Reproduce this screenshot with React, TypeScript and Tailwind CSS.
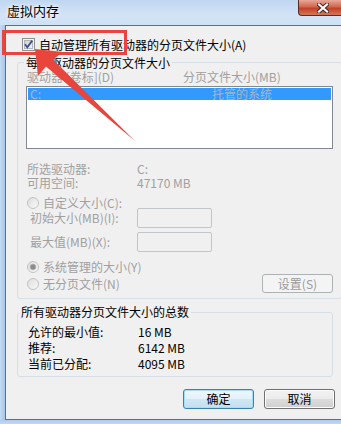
import { useId } from "react";

function CheckBox() {
  const id = useId();
  return (
    <svg width="13" height="13" viewBox="0 0 13 13" className="shrink-0">
      <defs>
        <linearGradient id={id} x1="0" y1="0" x2="1" y2="1">
          <stop offset="0" stopColor="#cbcfd5" />
          <stop offset="1" stopColor="#f6f6f6" />
        </linearGradient>
      </defs>
      <rect x="0.5" y="0.5" width="12" height="12" fill="#f4f4f4" stroke="#8e8f8f" />
      <rect x="2.5" y="2.5" width="8" height="8" fill={`url(#${id})`} stroke="#b2b4b8" />
      <path d="M3 6.3 L5.3 9.2 L10.2 2.6" fill="none" stroke="#3c4f8c" strokeWidth="1.8" />
    </svg>
  );
}

function Radio({ checked = false }: { checked?: boolean }) {
  const id = useId();
  return (
    <svg width="12" height="12" viewBox="0 0 12 12" className="shrink-0">
      <defs>
        <linearGradient id={id} x1="0" y1="0" x2="1" y2="1">
          <stop offset="0" stopColor="#dcdcdc" />
          <stop offset="1" stopColor="#fbfbfb" />
        </linearGradient>
      </defs>
      <circle cx="6" cy="6" r="5.5" fill={`url(#${id})`} stroke="#c2c2c2" />
      {checked && <circle cx="6" cy="6" r="2.8" fill="#8c8c8c" stroke="#a8a8a8" strokeWidth="0.8" />}
    </svg>
  );
}

function WinButton({ label, primary = false, disabled = false }: { label: string; primary?: boolean; disabled?: boolean }) {
  if (disabled) {
    return (
      <div className="w-[71px] h-[19px] shrink-0 ml-auto flex items-center justify-center rounded-[3px] border border-[#adb2b5] bg-[#f4f4f4] text-[#9a9a9a]">
        {label}
      </div>
    );
  }
  return (
    <div
      className={
        primary
          ? "w-[71px] h-[20px] flex items-center justify-center rounded-[3px] border border-[#3c7fb1] bg-[linear-gradient(#eef7fd,#e3f1fa_50%,#d1e7f5_50%,#c3dfef)] shadow-[inset_0_0_0_1px_#a9dcf6]"
          : "w-[71px] h-[20px] flex items-center justify-center rounded-[3px] border border-[#707070] bg-[linear-gradient(#f2f2f2,#ebebeb_50%,#dddddd_50%,#cfcfcf)] shadow-[inset_0_0_0_1px_#fcfcfc]"
      }
    >
      {label}
    </div>
  );
}

function Field() {
  return <div className="w-[75px] h-[20px] rounded-[2px] border border-[#c3c6c9] bg-[#f0f0f0]" />;
}

export default function App() {
  return (
    <div className="relative w-[341px] h-[424px] overflow-hidden flex flex-col bg-[#bcd5f0] font-['Noto_Sans_CJK_SC',sans-serif] text-[12px] leading-[14px] text-black">
      {/* title bar */}
      <div className="h-[25px] shrink-0 flex bg-[linear-gradient(#c0d7f1,#d2e3f6_60%,#cfe1f5)]">
        <div className="flex-1 pl-[7px] pt-[2px] text-[13px] leading-[17px] [text-shadow:0_0_6px_#fff,0_0_3px_#fff]">虚拟内存</div>
        <div className="w-[43px] h-[16px] shrink-0 flex items-center justify-center pl-[6px] rounded-bl-[4px] border-l border-b border-[#5e2a22] bg-[linear-gradient(#e9a899,#d4664f_45%,#c0402c_55%,#d67752)]">
          <svg width="12" height="10" viewBox="0 0 12 10">
            <path d="M2 1.5 L10 8.5 M10 1.5 L2 8.5" stroke="#3b2520" strokeWidth="4" strokeLinecap="square" />
            <path d="M2 1.5 L10 8.5 M10 1.5 L2 8.5" stroke="#ffffff" strokeWidth="2.2" strokeLinecap="square" />
          </svg>
        </div>
      </div>

      <div className="flex flex-1 min-h-0">
        <div className="w-[5px] shrink-0 bg-[linear-gradient(to_right,#c4dbf4,#a6c6ea)]" />
        <div className="flex-1 flex flex-col bg-[#f0f0f0] border-l border-t border-b border-[#5c6f88]">
          <div className="mt-[12px] ml-[16px] h-[13px] flex items-center gap-[4px]">
            <CheckBox />
            <span>自动管理所有驱动器的分页文件大小(A)</span>
          </div>

          <fieldset className="mt-[5px] ml-[11px] w-[316px] border border-[#d5dfe5] rounded-[3px] p-0 pb-[5px]">
            <legend className="ml-[6px] px-[2px] leading-[13px]">每个驱动器的分页文件大小</legend>
            <div className="pl-[9px] pr-[8px] flex flex-col text-[#a0a0a0]">
              <div className="mt-[1px] h-[14px] flex">
                <span className="w-[156px]">驱动器 [卷标](D)</span>
                <span>分页文件大小(MB)</span>
              </div>
              <div className="mt-[2px] ml-[-1px] w-[307px] h-[63px] border border-[#828790] bg-white p-[1px]">
                <div className="h-[12px] leading-[12px] flex bg-[#3399ff] text-[#a3b6cc]">
                  <span className="w-[184px] pl-[2px]">C:</span>
                  <span>托管的系统</span>
                </div>
              </div>
              <div className="mt-[13px] h-[13px] leading-[13px] flex">
                <span className="w-[110px]">所选驱动器:</span>
                <span>C:</span>
              </div>
              <div className="mt-[1px] h-[13px] leading-[13px] flex">
                <span className="w-[110px]">可用空间:</span>
                <span>47170 MB</span>
              </div>
              <div className="mt-[7px] h-[13px] flex items-center gap-[4px]">
                <Radio />
                <span>自定义大小(C):</span>
              </div>
              <div className="mt-[-1px] h-[20px] flex items-center">
                <span className="w-[110px] pl-[3px]">初始大小(MB)(I):</span>
                <Field />
              </div>
              <div className="mt-[4px] h-[20px] flex items-center">
                <span className="w-[110px] pl-[3px]">最大值(MB)(X):</span>
                <Field />
              </div>
              <div className="mt-[8px] h-[13px] flex items-center gap-[4px]">
                <Radio checked />
                <span>系统管理的大小(Y)</span>
              </div>
              <div className="mt-[1px] h-[19px] flex items-center gap-[4px]">
                <Radio />
                <span>无分页文件(N)</span>
                <WinButton label="设置(S)" disabled />
              </div>
            </div>
          </fieldset>

          <fieldset className="mt-[6px] ml-[11px] w-[316px] border border-[#d5dfe5] rounded-[3px] p-0 pb-[4px]">
            <legend className="ml-[1px] px-[2px]">所有驱动器分页文件大小的总数</legend>
            <div className="mt-[5px] pl-[10px] flex flex-col leading-[16px]">
              <div className="h-[16px] flex">
                <span className="w-[110px]">允许的最小值:</span>
                <span>16 MB</span>
              </div>
              <div className="h-[16px] flex">
                <span className="w-[110px]">推荐:</span>
                <span>6142 MB</span>
              </div>
              <div className="h-[16px] flex">
                <span className="w-[110px]">当前已分配:</span>
                <span>4095 MB</span>
              </div>
            </div>
          </fieldset>

          <div className="mt-[12px] pr-[7px] flex justify-end gap-[10px]">
            <WinButton label="确定" primary />
            <WinButton label="取消" />
          </div>
        </div>
      </div>
      <div className="h-[4px] shrink-0 bg-[linear-gradient(#aecbec,#c3d9f2)]" />

      {/* red annotation drawn over the dialog */}
      <svg className="absolute inset-0 pointer-events-none" width="341" height="424" viewBox="0 0 341 424">
        <rect x="3.5" y="31.5" width="122" height="22" fill="none" stroke="#e8453c" strokeWidth="3" />
        <polygon points="35,49 63,52 53,59.5 135,141 46,66.5 38,76" fill="#e8453c" />
      </svg>
    </div>
  );
}
